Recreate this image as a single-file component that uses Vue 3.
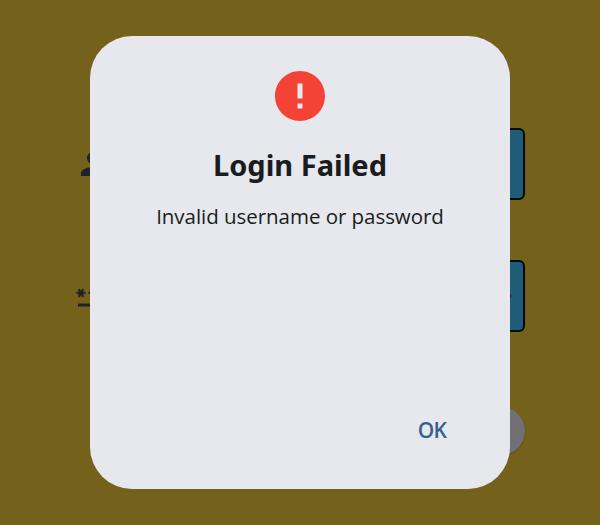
<script setup>
import { ref } from 'vue'

const open = ref(true)
const username = ref('')
const password = ref('')
</script>

<template>
  <div class="screen">
    <form class="form" @submit.prevent="open = true">
      <div class="row">
        <svg class="icon" viewBox="0 0 24 24"><path d="M12 12c2.210 0 4-1.790 4-4s-1.790-4-4-4-4 1.790-4 4 1.790 4 4 4zm0 2c-2.670 0-8 1.340-8 4v2h16v-2c0-2.660-5.330-4-8-4z" /></svg>
        <label class="field"><input v-model="username" type="text" /></label>
      </div>
      <div class="row">
        <svg class="icon" viewBox="0 0 24 24"><path d="M2 17h20v2H2zM3.150 12.950 4 11.470l.85 1.480 1.300-.75-.85-1.480H7v-1.500H5.300l.85-1.470L4.850 7 4 8.470 3.150 7l-1.300.75.85 1.470H1v1.500h1.700l-.85 1.480zM11.150 12.950l.85-1.480.85 1.480 1.300-.75-.85-1.480H15v-1.500h-1.700l.85-1.470-1.300-.75L12 8.470 11.150 7l-1.300.75.85 1.470H9v1.500h1.700l-.85 1.480zM19.150 12.950l.85-1.480.85 1.480 1.300-.75-.85-1.480H23v-1.500h-1.700l.85-1.470-1.300-.75L20 8.470 19.150 7l-1.300.75.85 1.470H17v1.500h1.700l-.85 1.480z" /></svg>
        <label class="field">
          <input v-model="password" type="password" />
          <svg class="icon eye" viewBox="0 0 24 24"><path d="M12 4.500C7 4.500 2.730 7.610 1 12c1.730 4.390 6 7.500 11 7.500s9.270-3.110 11-7.500c-1.730-4.390-6-7.500-11-7.500zM12 17a5 5 0 1 1 0-10 5 5 0 0 1 0 10zm0-8a3 3 0 1 0 0 6 3 3 0 0 0 0-6z" /></svg>
        </label>
      </div>
      <button class="submit" type="submit"></button>
    </form>

    <div v-if="open" class="overlay">
      <section class="dialog" role="alertdialog">
        <svg class="alert" viewBox="0 0 24 24"><path d="M12 2C6.480 2 2 6.480 2 12s4.480 10 10 10 10-4.480 10-10S17.520 2 12 2zm1 15h-2v-2h2v2zm0-4h-2V7h2v6z" /></svg>
        <h1>Login Failed</h1>
        <p>Invalid username or password</p>
        <button class="ok" type="button" @click="open = false">OK</button>
      </section>
    </div>
  </div>
</template>

<style>
body { background: #73611c; }
</style>

<style scoped>
.screen {
  position: relative;
  box-sizing: border-box;
  height: 525px;
  overflow: hidden;
  background: #73611c;
  font-family: "Open Sans", "Noto Sans", sans-serif;
}
.form {
  display: flex;
  flex-direction: column;
  gap: 60px;
  padding: 128px 75px 0;
}
.row {
  display: flex;
  align-items: center;
  gap: 24px;
  height: 72px;
}
.icon {
  flex: none;
  width: 36px;
  height: 36px;
  fill: #202227;
}
.field {
  box-sizing: border-box;
  display: flex;
  flex: 1;
  align-items: center;
  height: 72px;
  padding-right: 10px;
  border: 2px solid #05090c;
  border-radius: 6px;
  background: #1e5c78;
}
.field input {
  flex: 1;
  min-width: 0;
  border: 0;
  outline: 0;
  background: transparent;
}
.eye { fill: #30272a; }
.submit {
  align-self: flex-end;
  width: 160px;
  height: 48px;
  margin-top: 15px;
  border: 0;
  border-radius: 24px;
  background: #717075;
  box-shadow: 0 1px 2px rgba(0, 0, 0, 0.2);
}
.overlay {
  position: absolute;
  inset: 0;
  display: flex;
  align-items: flex-start;
  justify-content: center;
  padding-top: 36px;
}
.dialog {
  box-sizing: border-box;
  display: flex;
  flex-direction: column;
  align-items: center;
  width: 420px;
  height: 453px;
  padding: 30px 36px 29px;
  border-radius: 42px;
  background: #e6e8ed;
  color: #191c20;
}
.alert {
  flex: none;
  width: 60px;
  height: 60px;
  fill: #f44336;
}
h1 {
  margin: 18px 0 0;
  font-family: "Noto Sans", "Open Sans", sans-serif;
  font-size: 29px;
  font-weight: 700;
  line-height: 42px;
  white-space: nowrap;
}
p {
  margin: 15px 0 0;
  font-size: 20.5px;
  font-weight: 400;
  line-height: 30px;
  letter-spacing: -0.04px;
  white-space: nowrap;
}
.ok {
  align-self: flex-end;
  width: 84px;
  height: 60px;
  margin-top: auto;
  padding: 0;
  border: 0;
  background: transparent;
  color: #36618e;
  font: 600 21px "Open Sans", "Noto Sans", sans-serif;
  letter-spacing: -0.6px;
}
</style>
